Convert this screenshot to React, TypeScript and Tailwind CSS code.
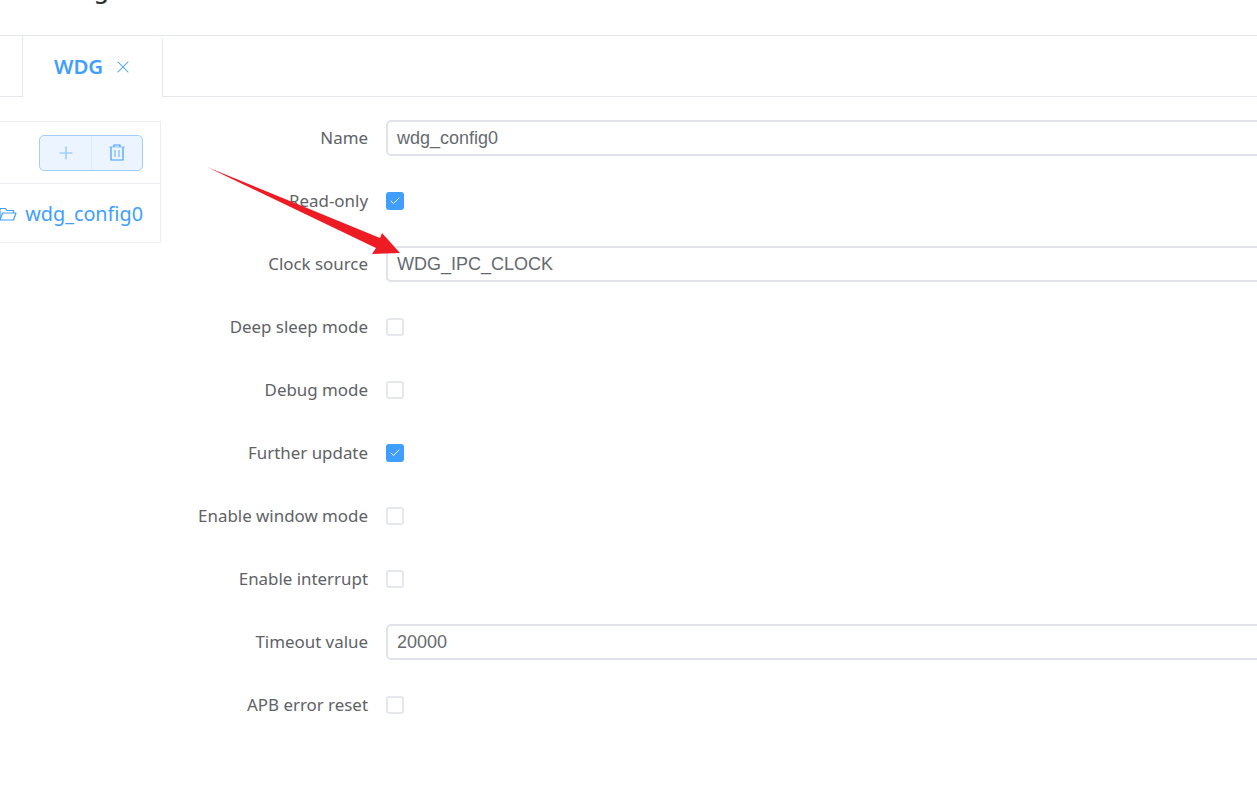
import React from 'react';
import { Plus, X, Check } from 'lucide-react';

type Field = { label: string; kind: 'input' | 'check'; value?: string; checked?: boolean };

const fields: Field[] = [
  { label: 'Name', kind: 'input', value: 'wdg_config0' },
  { label: 'Read-only', kind: 'check', checked: true },
  { label: 'Clock source', kind: 'input', value: 'WDG_IPC_CLOCK' },
  { label: 'Deep sleep mode', kind: 'check' },
  { label: 'Debug mode', kind: 'check' },
  { label: 'Further update', kind: 'check', checked: true },
  { label: 'Enable window mode', kind: 'check' },
  { label: 'Enable interrupt', kind: 'check' },
  { label: 'Timeout value', kind: 'input', value: '20000' },
  { label: 'APB error reset', kind: 'check' },
];

const FormRow = ({ field }: { field: Field }) => (
  <div className="flex items-center h-[36px] mb-[27px]">
    <label className="w-[225px] shrink-0 pr-[18px] text-right text-[16.9px] text-[#606266]">{field.label}</label>
    {field.kind === 'input' ? (
      <div className="flex-1 h-[36px] flex items-center px-[9px] border-2 border-[#e0e3ea] rounded-[5px] bg-white font-['Liberation_Sans',sans-serif] text-[18px] text-[#666a70] -mr-4">
        {field.value}
      </div>
    ) : field.checked ? (
      <span className="w-[18px] h-[18px] rounded-[3px] bg-[#409eff] flex items-center justify-center">
        <Check className="w-[12px] h-[12px] text-white" strokeWidth={2} />
      </span>
    ) : (
      <span className="w-[18px] h-[18px] rounded-[3px] border-2 border-[#e4e7ed] bg-white" />
    )}
  </div>
);

export default function App() {
  return (
    <div className="relative w-[1257px] h-[805px] overflow-hidden bg-white font-['Noto_Sans',sans-serif]">
      {/* page title, cut off by the top of the window */}
      <div className="h-[36px] border-b border-[#e4e7ed] overflow-hidden">
        <div className="pl-[34px] -mt-[27px] text-[24px] leading-[32px] font-medium text-[#303133]">Config</div>
      </div>

      {/* tabs */}
      <div className="flex h-[61px] border-b border-[#e4e7ed]">
        <div className="w-[23px] border-r border-[#e4e7ed]" />
        <div className="w-[140px] h-[61px] flex items-center pl-[31px] gap-[10px] border-r border-[#e4e7ed] rounded-tr-[5px] bg-white text-[#409eff]">
          <span className="text-[20.4px] font-semibold">WDG</span>
          <X className="w-[20px] h-[20px]" strokeWidth={1.25} />
        </div>
      </div>

      <div className="flex pt-[23px]">
        {/* config list */}
        <div className="w-[161px] shrink-0 h-[122px] mt-px border-y border-r border-[#ebeef5]">
          <div className="h-[62px] flex items-center justify-end pr-[17px] border-b border-[#ebeef5]">
            <div className="flex h-[36px] w-[104px] rounded-[5px] border border-[#a0cfff] bg-[#ecf5ff]">
              <span className="w-[52px] flex items-center justify-center border-r border-[#d9ecff] text-[#a0cfff]">
                <Plus className="w-[20px] h-[20px]" strokeWidth={2} />
              </span>
              <span className="flex-1 flex items-center justify-center text-[#409eff]">
                <svg className="w-[16px] h-[17px]" viewBox="0 0 16 17" fill="none" stroke="currentColor" strokeWidth="1.2">
                  <path d="M0 3h16" stroke="#a0cfff" />
                  <path d="M5 3V1h6v2" />
                  <path d="M2 3v13h12V3" />
                  <path d="M6 6v7M10 6v7" stroke="#79bbff" />
                </svg>
              </span>
            </div>
          </div>
          <div className="h-[59px] flex items-center justify-end pr-[17px] gap-[8px] text-[#409eff] text-[19.8px]">
            <svg className="w-[18px] h-[16px] shrink-0" viewBox="0 0 18 16" fill="none" stroke="currentColor" strokeWidth="1.2" strokeLinejoin="round">
              <path d="M1 13V2.5h5.5l1.5 2h6.5V7" />
              <path d="M3.5 7H17l-2.5 7H1z" />
            </svg>
            <span>wdg_config0</span>
          </div>
        </div>

        {/* form */}
        <div className="flex-1 min-w-0">
          {fields.map(field => (
            <FormRow key={field.label} field={field} />
          ))}
        </div>
      </div>

      {/* red annotation arrow */}
      <svg className="absolute left-0 top-0 pointer-events-none" width="1257" height="805">
        <polygon points="207,167 380,238 382,233 400,253 372,254 376,248" fill="#ed1c24" />
      </svg>
    </div>
  );
}
